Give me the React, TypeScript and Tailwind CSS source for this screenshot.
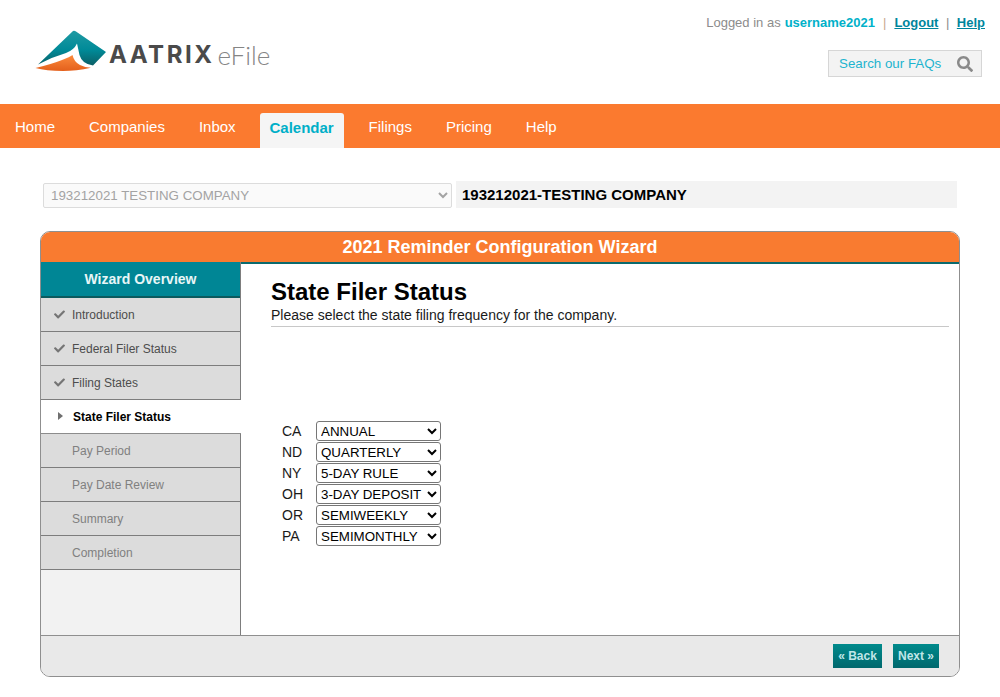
import React from "react";
import { FaCheck, FaSearch } from "react-icons/fa";

const navlinks = ["Home", "Companies", "Inbox", "Calendar", "Filings", "Pricing", "Help"];

const steps = [
  { label: "Introduction", state: "done" },
  { label: "Federal Filer Status", state: "done" },
  { label: "Filing States", state: "done" },
  { label: "State Filer Status", state: "current" },
  { label: "Pay Period", state: "todo" },
  { label: "Pay Date Review", state: "todo" },
  { label: "Summary", state: "todo" },
  { label: "Completion", state: "todo" },
];

const states = [
  { code: "CA", value: "ANNUAL" },
  { code: "ND", value: "QUARTERLY" },
  { code: "NY", value: "5-DAY RULE" },
  { code: "OH", value: "3-DAY DEPOSIT" },
  { code: "OR", value: "SEMIWEEKLY" },
  { code: "PA", value: "SEMIMONTHLY" },
];

const frequencies = ["ANNUAL", "QUARTERLY", "5-DAY RULE", "3-DAY DEPOSIT", "SEMIWEEKLY", "SEMIMONTHLY"];

function Logo() {
  return (
    <div className="flex items-center">
      <svg width="80" height="50" viewBox="30 25 80 50" className="shrink-0">
        <defs>
          <linearGradient id="teal" x1="0" y1="0" x2="0" y2="1">
            <stop offset="0" stopColor="#1f9aa3" />
            <stop offset="0.55" stopColor="#008a98" />
            <stop offset="1" stopColor="#0b5f66" />
          </linearGradient>
          <linearGradient id="orange" x1="0" y1="0" x2="0" y2="1">
            <stop offset="0" stopColor="#fb8a3c" />
            <stop offset="1" stopColor="#e4601c" />
          </linearGradient>
        </defs>
        <path
          d="M73 31 Q74.500 30.500 76 31.500 L106 52 L93 65.500 Q82 64 79.500 55 Q78 48 77 43.500 Q74 50 66 53 Q52 57 38 64.500 Z"
          fill="url(#teal)"
        />
        <path
          d="M35.500 68 Q52 64 62 60 Q70 57 72.500 55 Q74 62 80 65 Q85 67.500 91 67.800 Q76 71 63 71 Q46 71 35.500 68 Z"
          fill="url(#orange)"
        />
      </svg>
      <span className="ml-[-1px] mt-[9px] font-['Inter',sans-serif] text-[24px] font-bold leading-none tracking-[0.105em] text-[#4a4a4a]">
        AATRIX
      </span>
      <span className="ml-[3px] mt-[9px] font-['Lato',sans-serif] text-[26px] font-light leading-none text-[#858585]">
        eFile
      </span>
    </div>
  );
}

function Header() {
  return (
    <div className="flex h-[104px] justify-between bg-white">
      <div className="pl-[30px] pt-[25px]">
        <Logo />
      </div>
      <div className="flex flex-col items-end pr-[15px] pt-[14px]">
        <div className="flex h-[16px] items-center text-[13px] leading-none text-[#8c8c8c]">
          Logged in as
          <span className="ml-[4px] font-bold text-[#00b1c9]">username2021</span>
          <span className="mx-[8px] text-[#c9a78f]">|</span>
          <a className="font-bold text-[#00859c] underline">Logout</a>
          <span className="mx-[7.5px] text-[#8c8c8c]">|</span>
          <a className="font-bold text-[#00859c] underline">Help</a>
        </div>
        <div className="mr-[3px] mt-[20px] flex h-[27px] w-[154px] items-center justify-between border border-[#d6d6d6] bg-[#f3f3f3] pl-[10px] pr-[8px]">
          <span className="text-[13.33px] text-[#1db4cf]">Search our FAQs</span>
          <FaSearch className="text-[16px] text-[#8a8a8a]" />
        </div>
      </div>
    </div>
  );
}

function NavBar() {
  return (
    <div className="flex h-[44px] items-end gap-[34px] bg-[#fb7a2f] pl-[15px]">
      {navlinks.map((link) =>
        link === "Calendar" ? (
          <div
            key={link}
            className="-ml-[10px] -mr-[9px] flex h-[35px] w-[84px] items-center justify-center rounded-t-[3px] bg-[#f5f5f5] pb-[5px] text-[15px] font-bold text-[#00afc8]"
          >
            {link}
          </div>
        ) : (
          <div key={link} className="flex h-[44px] items-center pt-[2px] text-[15px] text-white">
            {link}
          </div>
        )
      )}
    </div>
  );
}

function StepRow({ label, state }: { label: string; state: string }) {
  if (state === "current") {
    return (
      <div className="flex h-[34px] w-[201px] items-center border-b border-[#8c8c8c] bg-white pl-[17px] text-[12px] font-bold text-black">
        <svg width="5" height="8" viewBox="0 0 5 8" className="mb-[2px] mr-[10px] shrink-0">
          <path d="M0 0 L5 4 L0 8 Z" fill="#6f6f6f" />
        </svg>
        {label}
      </div>
    );
  }
  return (
    <div
      className={`flex h-[34px] items-center border-b border-[#7d7d7d] bg-[#dcdcdc] pl-[13px] text-[12px] ${
        state === "done" ? "text-[#4d4d4d]" : "text-[#808080]"
      }`}
    >
      <span className="flex w-[18px] shrink-0 items-center">
        {state === "done" && <FaCheck className="text-[11px] text-[#757575]" />}
      </span>
      {label}
    </div>
  );
}

function Sidebar() {
  return (
    <div className="flex w-[200px] shrink-0 flex-col border-r border-[#7d7d7d] bg-[#f2f2f2]">
      <div className="flex h-[36px] items-center justify-center border-b-2 border-[#0b5a5e] bg-[#008695] pt-[1px] text-[14px] font-bold text-[#e8f6f7]">
        Wizard Overview
      </div>
      {steps.map((step) => (
        <StepRow key={step.label} label={step.label} state={step.state} />
      ))}
    </div>
  );
}

function StateRows() {
  return (
    <div className="mt-[94px] flex flex-col gap-[1px] pl-[11px]">
      {states.map((s) => (
        <div key={s.code} className="flex h-[20px] items-center text-[14px] text-[#1a1a1a]">
          <span className="w-[34px]">{s.code}</span>
          <select
            defaultValue={s.value}
            className="h-[20px] w-[125px] rounded-[3px] border border-[#767676] bg-white text-[13.33px] text-black"
          >
            {frequencies.map((f) => (
              <option key={f}>{f}</option>
            ))}
          </select>
        </div>
      ))}
    </div>
  );
}

function Wizard() {
  return (
    <div className="mx-[40px] mt-[23px] flex h-[446px] flex-col overflow-hidden rounded-[10px] border border-[#8f8f8f]">
      <div className="flex h-[30px] shrink-0 items-center justify-center bg-[#f97b30] text-[18px] font-bold text-white">
        2021 Reminder Configuration Wizard
      </div>
      <div className="flex min-h-0 flex-1 border-b border-[#8f8f8f]">
        <Sidebar />
        <div className="flex-1 border-t-2 border-[#0b6a6e] bg-white pl-[30px] pr-[10px] pt-[14px]">
          <div className="text-[24px] font-bold leading-[28px] text-black">State Filer Status</div>
          <div className="h-[21px] border-b border-[#c8c8c8] text-[14px] leading-[18px] text-[#1a1a1a]">
            Please select the state filing frequency for the company.
          </div>
          <StateRows />
        </div>
      </div>
      <div className="flex h-[40px] shrink-0 items-center justify-end gap-[11px] bg-[#e9e9e9] pr-[20px]">
        <button className="h-[24px] w-[49px] bg-gradient-to-b from-[#008a8c] to-[#00686d] text-[12px] font-bold text-[#bfe6e8]">
          « Back
        </button>
        <button className="h-[24px] w-[46px] bg-gradient-to-b from-[#008a8c] to-[#00686d] text-[12px] font-bold text-[#bfe6e8]">
          Next »
        </button>
      </div>
    </div>
  );
}

export default function App() {
  return (
    <div className="h-[697px] w-[1000px] overflow-hidden bg-white font-['Liberation_Sans',Arial,sans-serif]">
      <Header />
      <NavBar />
      <div className="flex items-end pl-[43px] pr-[43px] pt-[33px]">
        <select
          disabled
          defaultValue="193212021 TESTING COMPANY"
          className="h-[25px] w-[409px] rounded-[2px] border border-[#dcdcdc] bg-[#fafafa] pl-[3px] text-[13.33px] text-[#a3a3a3] opacity-100"
        >
          <option>193212021 TESTING COMPANY</option>
        </select>
        <div className="ml-[4px] flex h-[27px] flex-1 items-center bg-[#f3f3f3] pl-[6px] pt-[1px] text-[15px] font-bold text-black">
          193212021-TESTING COMPANY
        </div>
      </div>
      <Wizard />
    </div>
  );
}
